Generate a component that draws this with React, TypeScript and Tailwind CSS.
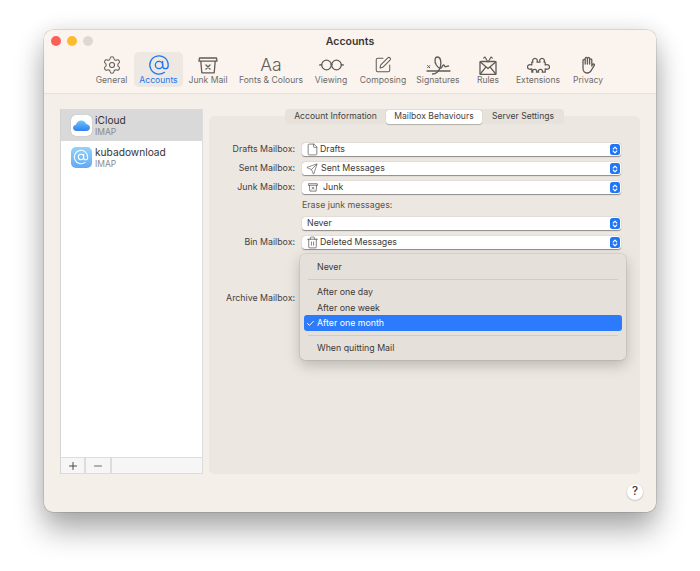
import { AtSign, SquarePen, Settings, File, Send, Trash2, Plus, Minus, Check } from "lucide-react";
import type { ReactNode } from "react";

const stroke = { fill: "none", stroke: "currentColor", strokeWidth: 1.3, strokeLinecap: "round", strokeLinejoin: "round" } as const;

const JunkIcon = ({ s = 20 }: { s?: number }) => (
  <svg width={s} height={s * 0.85} viewBox="0 0 20 17" {...stroke}>
    <path d="M1.500 1h17l.5 3.200H1z" />
    <path d="M2.800 4.500l1 11.300h12.400l1-11.300" />
    <path d="M8 8l4 4M12 8l-4 4" />
  </svg>
);

const GlassesIcon = () => (
  <svg width="25" height="14" viewBox="0 0 25 14" {...stroke}>
    <circle cx="7.500" cy="7" r="4.800" />
    <circle cx="17.500" cy="7" r="4.800" />
    <path d="M12 6.200c.4-.3.7-.3 1 0M2.700 6.600L.8 7M22.300 6.600L24.200 7" />
  </svg>
);

const SignatureIcon = () => (
  <svg width="25" height="19" viewBox="0 0 25 19" {...stroke}>
    <path d="M1 15h23" />
    <path d="M1.500 9.500l2.300 2.300M3.800 9.500l-2.300 2.300" strokeWidth="1" />
    <path d="M6.500 18c3.500 0 7-3 8-7.500.8-4 .4-9.500-3-9.500-3 0-3.200 5-1.200 8 1.500 2.300 3.700 4 5.200 2.800 1-.9 1-2.800 2-2.800s1 1.800 2 1.800 1.500-.8 3-.8" />
  </svg>
);

const RulesIcon = () => (
  <svg width="18" height="19" viewBox="0 0 18 19" {...stroke}>
    <rect x="1" y="5.500" width="16" height="13" rx="1" />
    <path d="M1.300 6l7.700 6.500L16.700 6M1.300 18l5.500-6.800M16.700 18l-5.500-6.800" />
    <path d="M9 6L6 1.200M9 6l3-4.800M4.600 2.200L6 1l1 1.500M13.400 2.200L12 1l-1 1.500" strokeWidth="1.100" />
  </svg>
);

const PuzzleIcon = () => (
  <svg width="23" height="17" viewBox="0 0 24 17" {...stroke}>
    <path d="M5 5h1.200c-.9-2 .2-4 2.100-4s3 2 2.100 4h3.200c-.9-2 .2-4 2.100-4s3 2 2.100 4H19v3c2-1 4.500 0 4.500 2s-2.500 3-4.500 2v3.500h-3.200c.9-1.500 0-3-1.800-3s-2.700 1.500-1.800 3H9.800c.9-1.500 0-3-1.800-3s-2.700 1.500-1.800 3H5V12c-2 1-4.500 0-4.500-2s2.500-3 4.500-2z" />
  </svg>
);

const HandIcon = () => (
  <svg width="14" height="18" viewBox="0 0 14 18" {...stroke}>
    <path d="M2 10V4.500a1.100 1.100 0 0 1 2.200 0V8V2.500a1.100 1.100 0 0 1 2.200 0V8V2.500a1.100 1.100 0 0 1 2.200 0V8V4a1.100 1.100 0 0 1 2.200 0V10l.8-1.500c.6-1 2.200-.3 1.700.9L10.500 14c-1 2.200-2.500 3-4.500 3C3.500 17 2 15 2 12z" />
  </svg>
);

const Stepper = () => (
  <span className="flex h-[11px] w-[10px] flex-col items-center justify-center rounded-[2.500px] bg-[#2176f5]">
    <svg width="6" height="8" viewBox="0 0 6 8" fill="none" stroke="white" strokeWidth="1.100" strokeLinecap="round" strokeLinejoin="round">
      <path d="M1.200 3L3 1.200 4.800 3M1.200 5L3 6.800 4.800 5" />
    </svg>
  </span>
);

const Select = ({ icon, iconClass, children }: { icon?: ReactNode; iconClass?: string; children: ReactNode }) => (
  <div className="flex h-[13px] w-[319px] items-center rounded-[3px] bg-white pl-[5px] pr-[1.500px] text-[8.800px] text-[#3d3a38] shadow-[0_0.500px_1px_rgba(0,0,0,0.4)]">
    {icon && <span className={`flex items-center justify-center text-[#45423f] ${iconClass ?? "mr-[3px] w-[10px]"}`}>{icon}</span>}
    <span className="flex-1 leading-none">{children}</span>
    <Stepper />
  </div>
);

const Row = ({ label, children, h = "h-[13px]" }: { label?: string; children: ReactNode; h?: string }) => (
  <div className={`flex items-center ${h}`}>
    <div className="mr-[7px] w-[86px] text-right text-[8.800px] leading-none text-[#45423f]">{label}</div>
    {children}
  </div>
);

const tools: { label: string; w: string; icon: ReactNode; active?: boolean }[] = [
  { label: "General", w: "w-[45px]", icon: <Settings size={20} strokeWidth={1.250} /> },
  { label: "Accounts", w: "w-[49px]", icon: <AtSign size={22} strokeWidth={1.400} />, active: true },
  { label: "Junk Mail", w: "w-[50px]", icon: <JunkIcon /> },
  { label: "Fonts & Colours", w: "w-[76px]", icon: <span className="text-[17.500px] font-light leading-none">Aa</span> },
  { label: "Viewing", w: "w-[44px]", icon: <GlassesIcon /> },
  { label: "Composing", w: "w-[60px]", icon: <SquarePen size={18} strokeWidth={1.350} /> },
  { label: "Signatures", w: "w-[50px]", icon: <SignatureIcon /> },
  { label: "Rules", w: "w-[50px]", icon: <RulesIcon /> },
  { label: "Extensions", w: "w-[50px]", icon: <PuzzleIcon /> },
  { label: "Privacy", w: "w-[50px]", icon: <HandIcon /> },
];

const CloudLogo = () => (
  <div className="flex h-[21px] w-[21px] items-center justify-center rounded-[5px] bg-white shadow-[0_0_1px_rgba(0,0,0,0.3)]">
    <svg width="17" height="11" viewBox="0 0 17 11">
      <defs>
        <linearGradient id="cl" x1="0" y1="0" x2="0" y2="1">
          <stop offset="0" stopColor="#6fc4fb" />
          <stop offset="1" stopColor="#2f7ff0" />
        </linearGradient>
      </defs>
      <path fill="url(#cl)" d="M3.500 11C1.500 11 0 9.600 0 7.800 0 6.100 1.300 4.800 3 4.700 3.600 2.300 5.600.500 8.200.500c2.400 0 4.300 1.500 5 3.600 2.100.200 3.800 1.700 3.800 3.600 0 1.900-1.600 3.300-3.700 3.300z" />
    </svg>
  </div>
);

const AtLogo = () => (
  <div className="flex h-[21px] w-[21px] items-center justify-center rounded-[5px] bg-gradient-to-b from-[#93d3fb] to-[#62a9f5] text-white">
    <AtSign size={16} strokeWidth={1.600} />
  </div>
);

const Account = ({ name, logo, selected }: { name: string; logo: ReactNode; selected?: boolean }) => (
  <div className={`flex h-[32px] items-center pl-[9.500px] ${selected ? "bg-[#d9d9d9]" : ""}`}>
    {logo}
    <div className="ml-[3.500px] flex flex-col">
      <span className="text-[10.200px] leading-[13px] text-[#333]">{name}</span>
      <span className="text-[8.500px] leading-[10px] text-[#8b8b8b]">IMAP</span>
    </div>
  </div>
);

const MenuItem = ({ children, active, nudge }: { children: string; active?: boolean; nudge?: boolean }) => (
  <div className={`flex h-[16px] items-center rounded-[3px] pl-[13px] text-[8.800px] ${nudge ? "pt-[1px]" : ""} ${active ? "bg-[#2c7bfd] text-white" : "text-[#3d3a38]"}`}>
    {active && <Check size={9} strokeWidth={2.600} className="ml-[-11px] mr-[2px]" />}
    {children}
  </div>
);

const Sep = ({ cls = "my-[3.500px]" }: { cls?: string }) => <div className={`mx-[4px] h-px bg-[#d3ccc6] ${cls}`} />;

export default function App() {
  return (
    <div className="h-[571px] w-[700px] overflow-hidden bg-white pl-[44px] pt-[30px] [font-family:Inter,'Liberation_Sans',sans-serif]">
      <div className="flex h-[482px] w-[612px] flex-col rounded-[9px] bg-[#f4efe9] shadow-[0_0_0_0.500px_rgba(0,0,0,0.2),0_18px_30px_rgba(0,0,0,0.32),0_0_22px_rgba(0,0,0,0.1)]">
        <header className="h-[64px] shrink-0 rounded-t-[9px] border-b border-[#e7e1da] bg-[#fbf4ee]">
          <div className="flex h-[22px] items-center px-[7px]">
            <div className="flex flex-1 gap-[6px]">
              <span className="h-[10px] w-[10px] rounded-full bg-[#fc5f57]" />
              <span className="h-[10px] w-[10px] rounded-full bg-[#fdbc2e]" />
              <span className="h-[10px] w-[10px] rounded-full bg-[#dcd8d4]" />
            </div>
            <div className="pt-[2px] text-[10.500px] font-semibold leading-none text-[#3a3735]">Accounts</div>
            <div className="flex-1" />
          </div>
          <div className="flex pl-[45px]">
            {tools.map((t) => (
              <div
                key={t.label}
                className={`flex h-[35px] flex-col items-center justify-between rounded-[5px] pb-[2px] pt-[3px] ${t.w} ${t.active ? "bg-[#eee8e2] text-[#1f75f0]" : "text-[#5f5b57]"}`}
              >
                <div className="flex h-[20px] items-center justify-center">{t.icon}</div>
                <div className={`whitespace-nowrap text-[8.600px] leading-none ${t.active ? "" : "text-[#6f6b67]"}`}>{t.label}</div>
              </div>
            ))}
          </div>
        </header>
        <div className="flex h-[380px] shrink-0 gap-[6px] px-[16px] pt-[15px]">
          <aside className="flex h-[365px] w-[143px] shrink-0 flex-col border border-t-0 border-[#dcdcdc] border-l-[#d4d4d4] bg-white">
            <div className="flex-1">
              <Account name="iCloud" logo={<CloudLogo />} selected />
              <Account name="kubadownload" logo={<AtLogo />} />
            </div>
            <div className="flex h-[16px] border-t border-[#dddddd] bg-[#f6f6f6] text-[#4a4a4a]">
              <div className="flex w-[25px] items-center justify-center border-r-2 border-[#dddddd]">
                <Plus size={12} strokeWidth={2} />
              </div>
              <div className="flex w-[26px] items-center justify-center border-r-2 border-[#dddddd] text-[#6a6a6a]">
                <Minus size={12} strokeWidth={2} />
              </div>
            </div>
          </aside>
          <main className="flex h-[365px] w-[431px] flex-col">
            <div className="relative z-10 -mb-[8px] flex h-[15px] items-center self-center rounded-[4px] bg-[#e7e2dc] text-[8.600px] text-[#45423f]">
              <div className="flex h-full w-[101px] items-center justify-center">Account Information</div>
              <div className="flex h-[14px] w-[96px] items-center justify-center rounded-[3px] bg-white shadow-[0_0.500px_1px_rgba(0,0,0,0.25)]">Mailbox Behaviours</div>
              <div className="flex h-full w-[82px] items-center justify-center">Server Settings</div>
            </div>
            <div className="relative flex flex-1 flex-col gap-[6px] rounded-[5px] bg-[#ece7e1] pt-[27px]">
              <Row label="Drafts Mailbox:"><Select icon={<File size={13} strokeWidth={1.200} className="shrink-0" />} iconClass="mr-[3px] w-[10px]">Drafts</Select></Row>
              <Row label="Sent Mailbox:"><Select icon={<Send size={12} strokeWidth={1.200} className="shrink-0" />} iconClass="mr-[4px] w-[10px]">Sent Messages</Select></Row>
              <Row label="Junk Mailbox:"><Select icon={<JunkIcon s={10.500} />} iconClass="ml-[1px] mr-[5px] w-[10px]">Junk</Select></Row>
              <Row h="h-[11px]"><span className="text-[8.800px] leading-none text-[#5a5652]">Erase junk messages:</span></Row>
              <Row><Select>Never</Select></Row>
              <Row label="Bin Mailbox:"><Select icon={<Trash2 size={13} strokeWidth={1.200} className="shrink-0" />}>Deleted Messages</Select></Row>
              <div className="mt-[37px]"><Row label="Archive Mailbox:"><span /></Row></div>
              <div className="absolute left-[91px] top-[138px] w-[326px] rounded-[5px] bg-[#e6e0da] px-[4px] pb-[4px] pt-[5px] shadow-[0_0_0_0.500px_rgba(0,0,0,0.12),0_5px_14px_rgba(0,0,0,0.22)]">
                <MenuItem>Never</MenuItem>
                <Sep />
                <MenuItem nudge>After one day</MenuItem>
                <MenuItem nudge>After one week</MenuItem>
                <MenuItem active>After one month</MenuItem>
                <Sep cls="mb-[4px] mt-[3.500px]" />
                <MenuItem>When quitting Mail</MenuItem>
              </div>
            </div>
          </main>
        </div>
        <div className="flex flex-1 items-center justify-end pb-[3px] pr-[13px]">
          <div className="flex h-[16px] w-[16px] items-center justify-center rounded-full bg-white text-[11.500px] font-medium text-[#3d3a38] shadow-[0_0.500px_1.500px_rgba(0,0,0,0.3)]">?</div>
        </div>
      </div>
    </div>
  );
}
